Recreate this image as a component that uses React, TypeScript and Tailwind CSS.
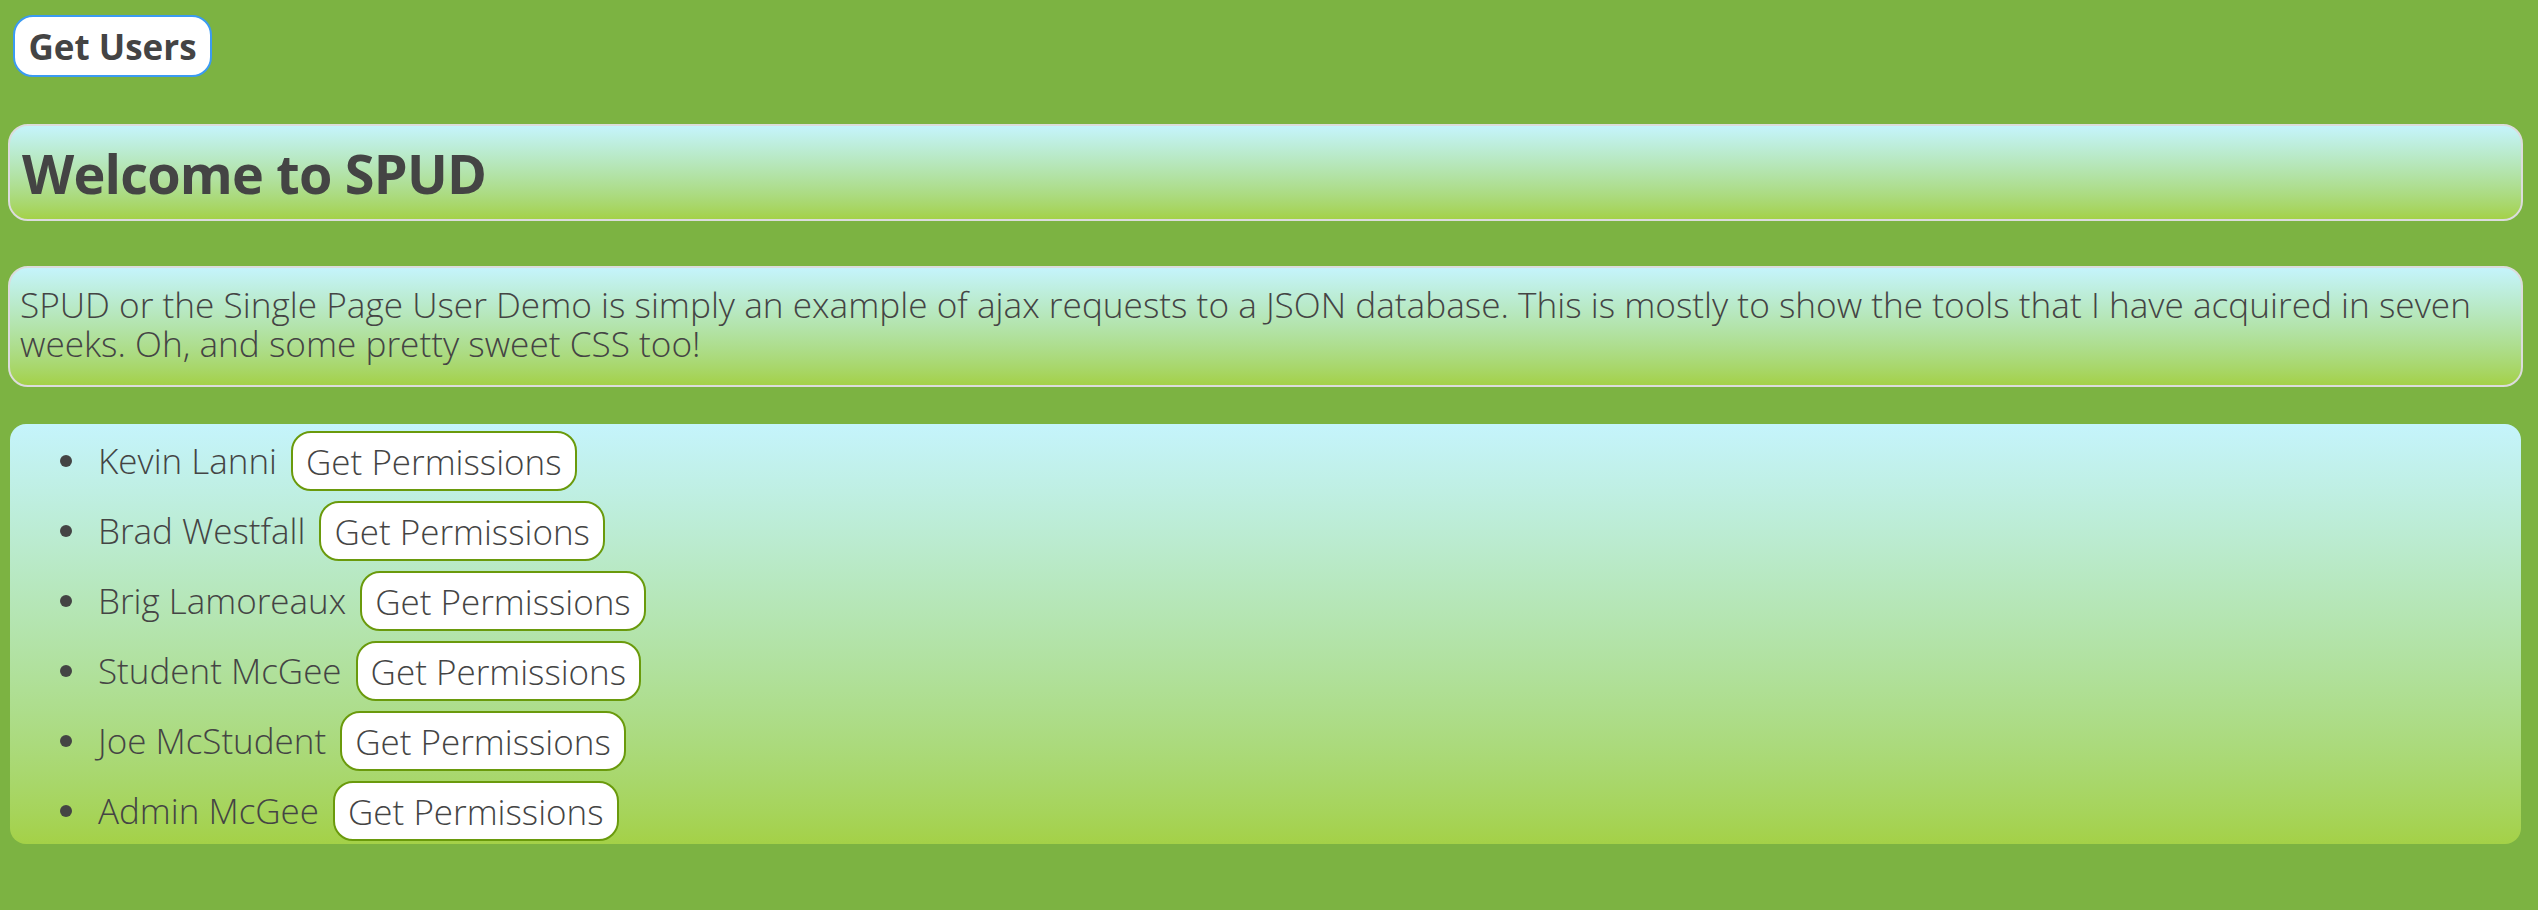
const users = [
  'Kevin Lanni',
  'Brad Westfall',
  'Brig Lamoreaux',
  'Student McGee',
  'Joe McStudent',
  'Admin McGee',
];

const panel = 'rounded-[20px] bg-gradient-to-b from-[#c5f4fc] to-[#a4d147]';

export default function App() {
  return (
    <div
      className="min-h-[910px] bg-[#7cb342] text-[#444] pt-[15px] pl-[8px] pr-[15px]"
      style={{ fontFamily: '"Open Sans", "Noto Sans", sans-serif' }}
    >
      {/* Get Users button */}
      <button className="ml-[5px] h-[62px] w-[199px] rounded-[20px] border-2 border-[#3b9bf2] bg-white text-[35px] font-bold leading-none text-[#444]">
        Get Users
      </button>

      {/* Header */}
      <div className={`${panel} mt-[47px] flex h-[97px] items-center border-2 border-[#dcdcdc] pl-[12px]`}>
        <h1 className="text-[54px] font-bold leading-none tracking-[-0.8px]">Welcome to SPUD</h1>
      </div>

      {/* Intro */}
      <div className={`${panel} mt-[45px] h-[121px] border-2 border-[#dcdcdc] pl-[10px] pr-[9px] pt-[17px]`}>
        <p className="text-[35.2px] font-light leading-[38.5px]">
          SPUD or the Single Page User Demo is simply an example of ajax requests to a JSON database. This is mostly to
          show the tools that I have acquired in seven weeks. Oh, and some pretty sweet CSS too!
        </p>
      </div>

      {/* Users */}
      <ul className="mx-[2px] mt-[37px] flex list-none flex-col gap-[10px] rounded-[16px] bg-gradient-to-b from-[#c5f4fc] to-[#a4d147] pl-[50px] pt-[7px] pb-[3px]">
        {users.map((name) => (
          <li key={name} className="flex h-[60px] items-center text-[35px] font-light">
            <span className="h-[12px] w-[12px] rounded-full bg-[#444]" />
            <span className="ml-[26px]">{name}</span>
            <button className="ml-[14px] h-[60px] rounded-[20px] border-2 border-[#6a9a0c] bg-white px-[13px] text-[35px] font-light leading-none text-[#444]">
              Get Permissions
            </button>
          </li>
        ))}
      </ul>
    </div>
  );
}
